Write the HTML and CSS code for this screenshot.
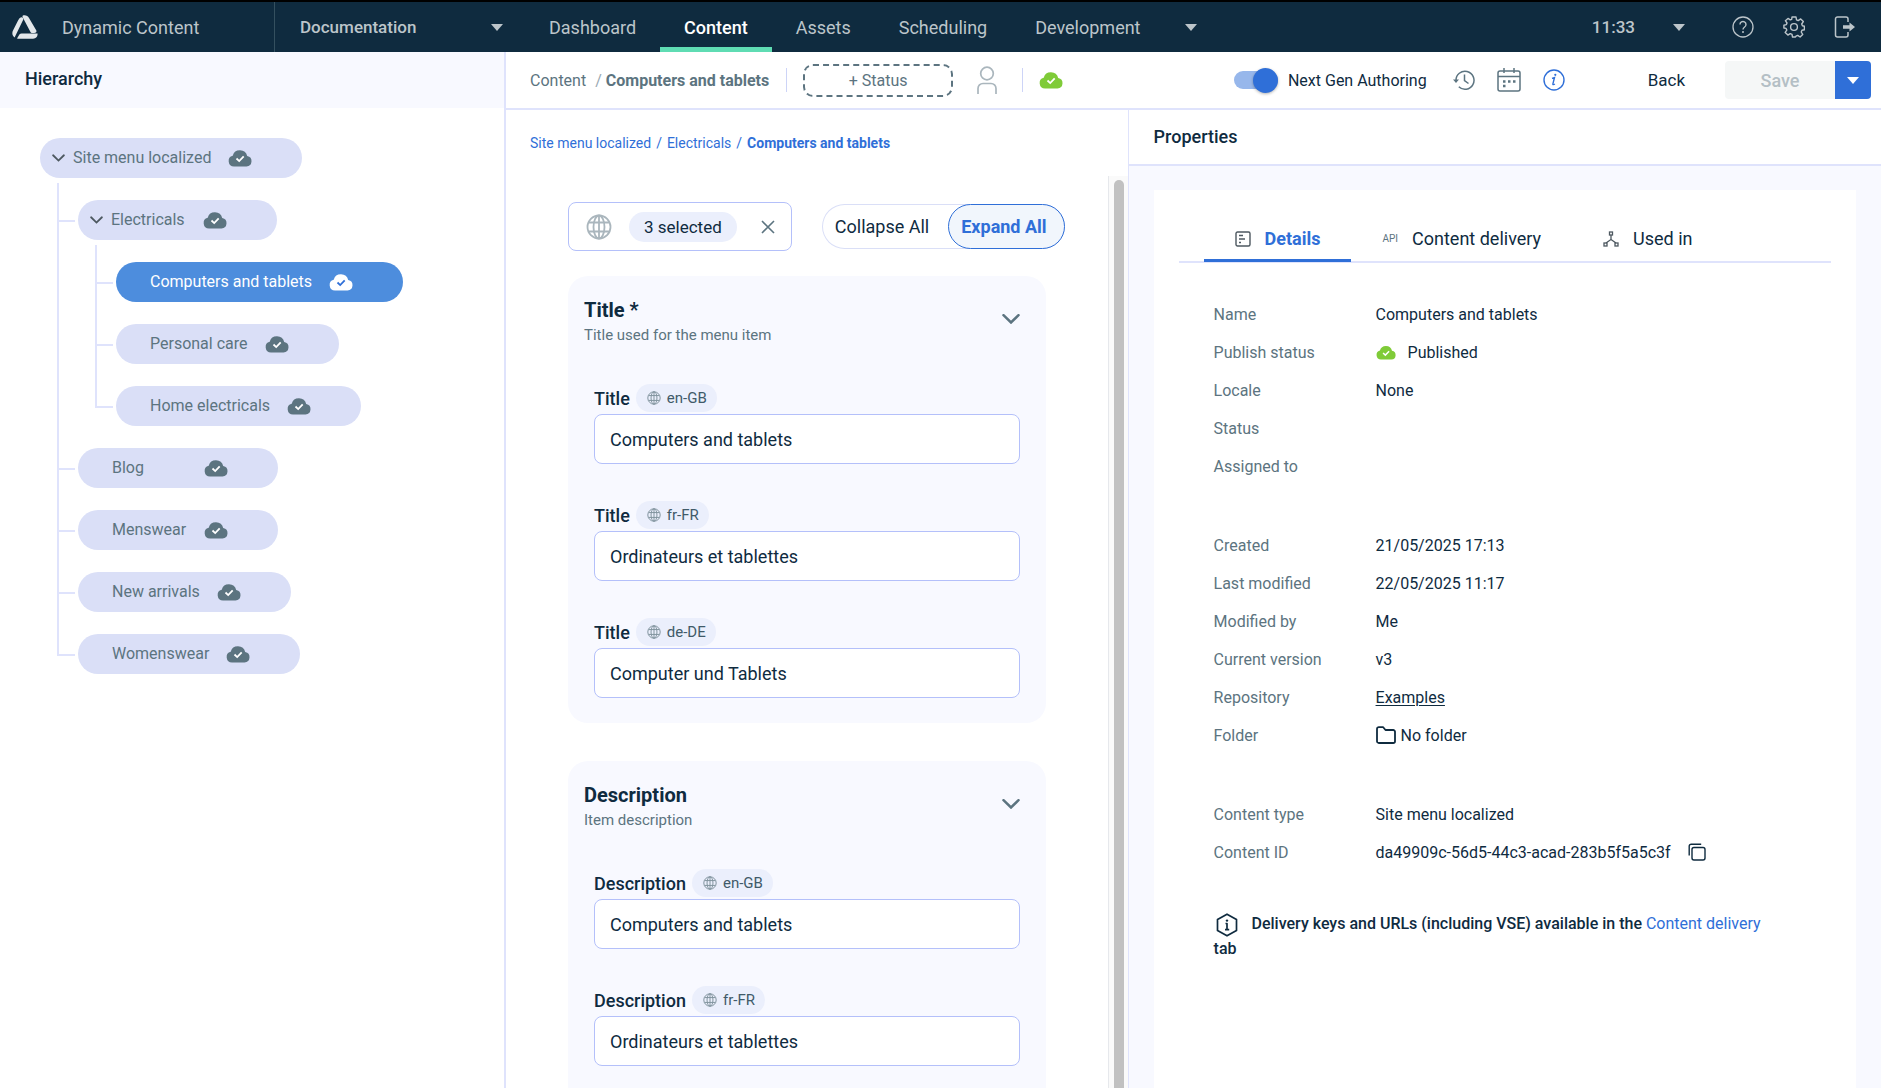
FILE: index.html
```html
<!DOCTYPE html>
<html lang="en">
<head>
    <meta charset="UTF-8">
    <meta name="viewport" content="width=device-width, initial-scale=1.0">
    <title>Dynamic Content</title>
    <link rel="stylesheet" href="styles.css">
</head>
<body>
    <svg class="sprite" aria-hidden="true">
        <symbol id="cloud" viewBox="0 0 24 18">
            <path fill="currentColor" stroke="none" d="M6 17.500a5.500 5.500 0 0 1-1.300-10.800A7.500 7.500 0 0 1 19.200 7 5.300 5.300 0 0 1 18.500 17.500z"/>
            <path fill="none" stroke-width="1.800" d="M8.500 9.500l2.700 2.600 4.500-4.700"/>
        </symbol>
        <symbol id="globe" viewBox="0 0 26 26">
            <g fill="none" stroke="currentColor" stroke-width="1.800">
                <circle cx="13" cy="13" r="11.500"/>
                <ellipse cx="13" cy="13" rx="5.500" ry="11.500"/>
                <path d="M13 1.500v23M3 8.500h20M3 17.500h20"/>
            </g>
        </symbol>
        <symbol id="chevron" viewBox="0 0 18 10">
            <path fill="none" stroke="currentColor" stroke-width="2.500" stroke-linecap="round" d="M1.500 1.200L9 8.500l7.500-7.300"/>
        </symbol>
        <symbol id="caret" viewBox="0 0 12 7">
            <path fill="currentColor" d="M0 0h12L6 7z"/>
        </symbol>
    </svg>

    <header class="topbar">
        <a class="brand" href="#">
            <svg class="logo" viewBox="0 0 26 24">
                <path d="M9.300 2.200C7.600 2.500 6.800 4.300 5.800 6L1 15.500C-.2 18 .2 20.600 2.600 22.400L11.200 4.800C11.700 3.500 10.800 2 9.300 2.200z"/>
                <path d="M10.800.5C13.500-.3 15.800.8 17 3L24.200 15.200C25 16.800 24 18 22.300 18H20.500C19.300 18 18.700 17.300 18.200 16.400L10.400 1.800z"/>
                <path d="M5 23.400L7.400 19.600C7.900 18.900 8.700 18.500 9.600 18.500H25.600C25.700 21.500 24 23.700 21 23.700H6z"/>
            </svg>
            Dynamic Content
        </a>
        <div class="hub">
            <select class="hub-select" aria-label="Hub">
                <option>Documentation</option>
            </select>
            <svg class="caret"><use href="#caret"/></svg>
        </div>
        <nav class="nav">
            <a href="#">Dashboard</a>
            <a href="#" class="active">Content</a>
            <a href="#">Assets</a>
            <a href="#">Scheduling</a>
            <a href="#">Development</a>
            <button class="nav-more" aria-label="More"><svg class="caret"><use href="#caret"/></svg></button>
        </nav>
        <div class="tools">
            <button class="clock">11:33 <svg class="caret"><use href="#caret"/></svg></button>
            <button aria-label="Help">
                <svg width="22" height="22" viewBox="0 0 22 22">
                    <circle cx="11" cy="11" r="10" fill="none" stroke="currentColor" stroke-width="1.300"/>
                    <path d="M8 8.500a3 3 0 1 1 4.600 2.500c-1.200.8-1.600 1.300-1.600 2.500" fill="none" stroke="currentColor" stroke-width="1.400"/>
                    <circle cx="11" cy="16" r="1" fill="currentColor"/>
                </svg>
            </button>
            <button aria-label="Settings">
                <svg width="22" height="22" viewBox="0 0 22 22">
                    <g fill="none" stroke="currentColor" stroke-width="1.400" stroke-linejoin="round">
                        <path d="M9 1h4l.5 2.800 1.700.8 2.500-1.700 2.600 2.700-1.600 2.400.7 1.700 2 .5v3.600l-2.400.5-.8 1.700 1.500 2.400-2.600 2.600-2.400-1.600-1.700.7L12.500 21h-3L9 18.400l-1.800-.8-2.300 1.500-2.700-2.700 1.600-2.300-.7-1.700L.9 12V9.200l2.500-.6.6-1.600-1.600-2.300L5 2.400l2.300 1.500 1.400-.5z"/>
                        <circle cx="11" cy="11" r="3.400"/>
                    </g>
                </svg>
            </button>
            <button aria-label="Log out">
                <svg width="22" height="22" viewBox="0 0 22 22">
                    <path d="M14 6V3a2 2 0 0 0-2-2H3.500a2 2 0 0 0-2 2v16a2 2 0 0 0 2 2H12a2 2 0 0 0 2-2v-3" fill="none" stroke="currentColor" stroke-width="1.500"/>
                    <path d="M9 9.300h6.500V6.500L21 11l-5.500 4.500v-2.800H9z" fill="currentColor"/>
                </svg>
            </button>
        </div>
    </header>

    <div class="layout">
        <aside class="sidebar">
            <h2 class="sidebar-title">Hierarchy</h2>
            <ul class="tree">
                <li>
                    <a href="#" class="node"><svg class="toggle"><use href="#chevron"/></svg><span>Site menu localized</span><svg class="cloud"><use href="#cloud"/></svg></a>
                    <ul>
                        <li>
                            <a href="#" class="node"><svg class="toggle"><use href="#chevron"/></svg><span>Electricals</span><svg class="cloud"><use href="#cloud"/></svg></a>
                            <ul>
                                <li><a href="#" class="node leaf selected"><span>Computers and tablets</span><svg class="cloud"><use href="#cloud"/></svg></a></li>
                                <li><a href="#" class="node leaf"><span>Personal care</span><svg class="cloud"><use href="#cloud"/></svg></a></li>
                                <li><a href="#" class="node leaf"><span>Home electricals</span><svg class="cloud"><use href="#cloud"/></svg></a></li>
                            </ul>
                        </li>
                        <li><a href="#" class="node leaf"><span>Blog</span><svg class="cloud"><use href="#cloud"/></svg></a></li>
                        <li><a href="#" class="node leaf"><span>Menswear</span><svg class="cloud"><use href="#cloud"/></svg></a></li>
                        <li><a href="#" class="node leaf"><span>New arrivals</span><svg class="cloud"><use href="#cloud"/></svg></a></li>
                        <li><a href="#" class="node leaf"><span>Womenswear</span><svg class="cloud"><use href="#cloud"/></svg></a></li>
                    </ul>
                </li>
            </ul>
        </aside>

        <main class="main">
            <div class="toolbar">
                <div class="location"><a href="#">Content</a><span>/</span><strong>Computers and tablets</strong></div>
                <span class="divider"></span>
                <button class="status">+ Status</button>
                <button class="assignee" aria-label="Assign">
                    <svg width="20" height="28" viewBox="0 0 20 28" fill="none" stroke="currentColor" stroke-width="1.700">
                        <circle cx="10" cy="7.500" r="6.300"/>
                        <path d="M1 28v-5.500a5 5 0 0 1 5-5h8a5 5 0 0 1 5 5V28"/>
                    </svg>
                </button>
                <span class="divider"></span>
                <svg class="cloud published"><use href="#cloud"/></svg>
                <div class="actions">
                    <label class="switch"><input type="checkbox" checked>Next Gen Authoring</label>
                    <button aria-label="History">
                        <svg width="22" height="22" viewBox="0 0 22 22" fill="none" stroke="currentColor" stroke-width="1.500">
                            <path d="M3 11.500A9 9 0 1 1 5.800 17.800M11.500 5.500v6l4 3"/>
                            <path d="M0 10.500h6L3 14z" fill="currentColor" stroke="none"/>
                        </svg>
                    </button>
                    <button aria-label="Schedule">
                        <svg width="24" height="24" viewBox="0 0 24 24" fill="none" stroke="currentColor" stroke-width="1.500">
                            <rect x="1" y="3" width="22" height="20" rx="2"/>
                            <path d="M1 8.500h22M7 0v5M17 0v5"/>
                            <path d="M6 13.500h2.500M11 13.500h2.500M16 13.500h2.500M6 18h2.500" stroke-width="2.400"/>
                        </svg>
                    </button>
                    <button class="info" aria-label="Information">
                        <svg width="22" height="22" viewBox="0 0 22 22" fill="none" stroke="currentColor" stroke-width="1.400">
                            <circle cx="11" cy="11" r="10"/>
                            <path d="M9 9.300l2.500-.8-1.600 6.300c-.2 1 .6 1.200 2 .2"/>
                            <circle cx="12.300" cy="5.800" r="1.100" fill="currentColor" stroke="none"/>
                        </svg>
                    </button>
                    <button class="back">Back</button>
                    <div class="save">
                        <button class="save-main" disabled>Save</button>
                        <button class="save-more" aria-label="More save options"><svg class="caret"><use href="#caret"/></svg></button>
                    </div>
                </div>
            </div>

            <div class="workspace">
                <section class="editor">
                    <nav class="breadcrumb">
                        <a href="#">Site menu localized</a>
                        <span>/</span>
                        <a href="#">Electricals</a>
                        <span>/</span>
                        <a href="#" class="current">Computers and tablets</a>
                    </nav>
                    <div class="scroller">
                        <div class="content">
                            <div class="controls">
                                <div class="locales">
                                    <svg class="globe"><use href="#globe"/></svg>
                                    <button class="count">3 selected</button>
                                    <button class="clear" aria-label="Clear">
                                        <svg width="14" height="14" viewBox="0 0 14 14" stroke="currentColor" stroke-width="1.600"><path d="M1 1l12 12M13 1L1 13"/></svg>
                                    </button>
                                </div>
                                <div class="expand">
                                    <button>Collapse All</button>
                                    <button class="active">Expand All</button>
                                </div>
                            </div>

                            <section class="card">
                                <div class="card-head">
                                    <div>
                                        <h3>Title *</h3>
                                        <p>Title used for the menu item</p>
                                    </div>
                                    <button aria-label="Collapse Title"><svg class="chevron"><use href="#chevron"/></svg></button>
                                </div>
                                <div class="field">
                                    <label for="title-en">Title <span class="locale"><svg class="globe"><use href="#globe"/></svg>en-GB</span></label>
                                    <input type="text" id="title-en" value="Computers and tablets">
                                </div>
                                <div class="field">
                                    <label for="title-fr">Title <span class="locale"><svg class="globe"><use href="#globe"/></svg>fr-FR</span></label>
                                    <input type="text" id="title-fr" value="Ordinateurs et tablettes">
                                </div>
                                <div class="field">
                                    <label for="title-de">Title <span class="locale"><svg class="globe"><use href="#globe"/></svg>de-DE</span></label>
                                    <input type="text" id="title-de" value="Computer und Tablets">
                                </div>
                            </section>

                            <section class="card">
                                <div class="card-head">
                                    <div>
                                        <h3>Description</h3>
                                        <p>Item description</p>
                                    </div>
                                    <button aria-label="Collapse Description"><svg class="chevron"><use href="#chevron"/></svg></button>
                                </div>
                                <div class="field">
                                    <label for="description-en">Description <span class="locale"><svg class="globe"><use href="#globe"/></svg>en-GB</span></label>
                                    <input type="text" id="description-en" value="Computers and tablets">
                                </div>
                                <div class="field">
                                    <label for="description-fr">Description <span class="locale"><svg class="globe"><use href="#globe"/></svg>fr-FR</span></label>
                                    <input type="text" id="description-fr" value="Ordinateurs et tablettes">
                                </div>
                            </section>
                        </div>
                        <div class="scrollbar"><div class="thumb"></div></div>
                    </div>
                </section>

                <section class="properties">
                    <h2 class="properties-title">Properties</h2>
                    <div class="panel">
                        <div class="tabs" role="tablist">
                            <button class="tab active" role="tab" aria-selected="true">
                                <svg width="16" height="16" viewBox="0 0 16 16" fill="none" stroke="currentColor" stroke-width="1.400">
                                    <rect x="1" y="1" width="14" height="14" rx="1.500"/>
                                    <path d="M4 4.500h4M4 8h6M4 11.500h2"/>
                                </svg>
                                Details
                            </button>
                            <button class="tab" role="tab">
                                <span class="api">API</span>
                                Content delivery
                            </button>
                            <button class="tab" role="tab">
                                <svg width="16" height="16" viewBox="0 0 16 16" fill="none" stroke="currentColor" stroke-width="1.300">
                                    <rect x="6.500" y="1" width="3" height="3"/>
                                    <rect x="1" y="12" width="3" height="3"/>
                                    <rect x="12" y="12" width="3" height="3"/>
                                    <path d="M8 4v4.500L3 12M8 8.500L13 12"/>
                                </svg>
                                Used in
                            </button>
                        </div>

                        <div class="details">
                            <dl>
                                <dt>Name</dt><dd>Computers and tablets</dd>
                                <dt>Publish status</dt><dd class="publish"><svg class="cloud small published"><use href="#cloud"/></svg>Published</dd>
                                <dt>Locale</dt><dd>None</dd>
                                <dt>Status</dt><dd></dd>
                                <dt>Assigned to</dt><dd></dd>
                            </dl>
                            <dl>
                                <dt>Created</dt><dd>21/05/2025 17:13</dd>
                                <dt>Last modified</dt><dd>22/05/2025 11:17</dd>
                                <dt>Modified by</dt><dd>Me</dd>
                                <dt>Current version</dt><dd>v3</dd>
                                <dt>Repository</dt><dd><a href="#">Examples</a></dd>
                                <dt>Folder</dt>
                                <dd class="folder">
                                    <svg width="20" height="18" viewBox="0 0 20 18" fill="none" stroke="currentColor" stroke-width="1.800" stroke-linejoin="round"><path d="M1 3a1.800 1.800 0 0 1 1.800-1.800h4.400L9.500 4h7.700A1.800 1.800 0 0 1 19 5.800v9.400a1.800 1.800 0 0 1-1.800 1.800H2.800A1.800 1.800 0 0 1 1 15.200z"/></svg>
                                    No folder
                                </dd>
                            </dl>
                            <dl>
                                <dt>Content type</dt><dd>Site menu localized</dd>
                                <dt>Content ID</dt>
                                <dd class="content-id">
                                    da49909c-56d5-44c3-acad-283b5f5a5c3f
                                    <button aria-label="Copy ID">
                                        <svg width="18" height="18" viewBox="0 0 18 18" fill="none" stroke="currentColor" stroke-width="1.400">
                                            <rect x="4" y="4.500" width="13" height="12.500" rx="2"/>
                                            <path d="M1.200 12.500V3.200a2 2 0 0 1 2-2h10"/>
                                        </svg>
                                    </button>
                                </dd>
                            </dl>
                            <p class="note">
                                <svg width="26" height="24" viewBox="0 0 26 24" fill="none" stroke="currentColor" stroke-width="1.700" stroke-linejoin="round">
                                    <path d="M13 1.200l9.500 5.300v11L13 22.800l-9.500-5.300v-11z"/>
                                    <path d="M11.500 10.500H13V16.500M11 16.700h4.200"/>
                                    <circle cx="13" cy="7.600" r="1.200" fill="currentColor" stroke="none"/>
                                </svg>
                                Delivery keys and URLs (including VSE) available in the <a href="#">Content delivery</a> tab
                            </p>
                        </div>
                    </div>
                </section>
            </div>
        </main>
    </div>
</body>
</html>
```
FILE: styles.css
```css
* {
    box-sizing: border-box;
}

body {
    font-family: Roboto, "Liberation Sans", sans-serif;
    font-size: 16px;
    margin: 0;
    height: 100vh;
    display: flex;
    flex-direction: column;
    overflow: hidden;
    color: #0f2b3f;
    background: white;
}

button, input, select {
    font: inherit;
    color: inherit;
}

button {
    padding: 0;
    border: none;
    background: none;
    cursor: pointer;
}

button svg {
    display: block;
}

a {
    color: inherit;
    text-decoration: none;
}

h2, h3, p, ul, dl, dd {
    margin: 0;
    padding: 0;
}

ul {
    list-style: none;
}

h2 {
    font-size: 18px;
    font-weight: 500;
}

.sprite {
    display: none;
}

.caret {
    width: 12px;
    height: 7px;
}

.cloud {
    width: 24px;
    height: 18px;
    flex-shrink: 0;
    color: #5c7480;
    stroke: white;
}

.cloud.small {
    width: 20px;
    height: 15px;
}

.cloud.published {
    color: #7fcb38;
}

/* Top bar */

.topbar {
    display: flex;
    flex-shrink: 0;
    height: 52px;
    border-top: 2px solid black;
    background: #0f2b3f;
    color: #bcc5ca;
    font-size: 18px;
}

.brand {
    display: flex;
    align-items: center;
    gap: 24px;
    width: 275px;
    padding-left: 12px;
    border-right: 1px solid #34505f;
}

.logo {
    width: 26px;
    height: 24px;
    fill: #e3e7ea;
}

.hub {
    display: grid;
    align-items: center;
    width: 250px;
    padding: 0 22px 0 25px;
    font-size: 17px;
    font-weight: 500;
}

.hub-select {
    grid-area: 1 / 1;
    width: 100%;
    height: 100%;
    padding: 0;
    border: none;
    appearance: none;
    background: none;
}

.hub .caret {
    grid-area: 1 / 1;
    justify-self: end;
    pointer-events: none;
}

.nav {
    display: flex;
}

.nav a {
    display: flex;
    align-items: center;
    padding: 5px 24px 0;
    border-bottom: 5px solid transparent;
}

.nav a.active {
    color: white;
    font-weight: 500;
    border-bottom-color: #5fdcb3;
}

.nav-more {
    padding: 0 20px;
}

.tools {
    display: flex;
    align-items: center;
    gap: 29px;
    margin-left: auto;
    padding-right: 25px;
}

.clock {
    display: flex;
    align-items: center;
    gap: 38px;
    margin-right: 18px;
    font-size: 17px;
    font-weight: 500;
}

/* Hierarchy */

.layout {
    display: flex;
    flex: 1;
    min-height: 0;
}

.sidebar {
    width: 27%;
    max-width: 506px;
    flex-shrink: 0;
    border-right: 2px solid #dfe3fc;
}

.sidebar-title {
    height: 56px;
    padding-left: 25px;
    line-height: 53px;
    background: #f8f9ff;
}

.tree {
    padding: 30px 0 0 40px;
}

.tree li {
    position: relative;
}

.tree ul {
    padding: 22px 0 0 38px;
}

.tree ul li + li {
    margin-top: 22px;
}

/* Connector lines between a node and its parent */
.tree ul li::before,
.tree ul li:not(:last-child)::after {
    content: "";
    position: absolute;
    left: -21px;
    top: -17px;
    border-left: 2px solid #dfe3fc;
}

.tree ul li::before {
    width: 16px;
    height: 37px;
    border-bottom: 2px solid #dfe3fc;
}

.tree ul li:not(:last-child)::after {
    bottom: -5px;
}

.node {
    display: inline-flex;
    align-items: center;
    height: 40px;
    padding: 0 50px 0 12px;
    border-radius: 20px;
    background: #dadff7;
    color: #5c7480;
    vertical-align: top;
}

.node span {
    min-width: 75px;
    margin-right: 17px;
    padding-bottom: 2px;
}

.node.leaf {
    padding-left: 34px;
}

.node.selected {
    background: #4d8ddd;
    color: white;
}

.node.selected .cloud {
    color: white;
    stroke: #2f6fd8;
}

.toggle {
    width: 13px;
    height: 8px;
    margin-right: 8px;
    color: #4d5860;
}

/* Toolbar */

.main {
    display: flex;
    flex: 1;
    flex-direction: column;
    min-width: 0;
}

.toolbar {
    display: flex;
    align-items: center;
    flex-shrink: 0;
    height: 58px;
    padding: 0 10px 0 24px;
    border-bottom: 2px solid #dfe3fc;
}

.location {
    display: flex;
    color: #5c7480;
}

.location span {
    margin: 0 4px 0 9px;
    color: #9aa9b2;
}

.location strong {
    font-weight: 700;
}

.divider {
    width: 1px;
    height: 24px;
    margin: 0 16px 0 17px;
    background: #cdd4f7;
}

.status {
    width: 150px;
    height: 33px;
    border: 2px dashed #5c7480;
    border-radius: 10px;
    color: #5c7480;
}

.assignee {
    margin-left: 24px;
    margin-right: 8px;
    color: #aab6bd;
}

.actions {
    display: flex;
    align-items: center;
    gap: 22px;
    margin-left: auto;
    color: #5c7480;
}

.switch {
    display: flex;
    align-items: center;
    gap: 10px;
    margin-right: 4px;
    color: #0f2b3f;
}

.switch input {
    width: 44px;
    height: 18px;
    margin: 0;
    appearance: none;
    border-radius: 9px;
    background: #97b7eb;
}

.switch input::before {
    content: "";
    display: block;
    width: 25px;
    height: 25px;
    margin: -3px 0 0 19px;
    border-radius: 50%;
    background: #2f6fd8;
    box-shadow: 0 1px 3px rgba(0, 0, 0, 0.3);
}

.actions .info {
    color: #2f6fd8;
}

.actions .back {
    margin: 0 18px 0 61px;
    color: #0f2b3f;
    font-size: 17px;
}

.save {
    display: flex;
    height: 38px;
}

.save-main {
    width: 110px;
    border-radius: 4px 0 0 4px;
    background: #f5f7f7;
    color: #b4bfc5;
    font-size: 18px;
    font-weight: 500;
}

.save-more {
    display: grid;
    place-items: center;
    width: 36px;
    border-radius: 0 4px 4px 0;
    background: #2f6fd8;
    color: white;
}

/* Editor */

.workspace {
    display: flex;
    flex: 1;
    min-height: 0;
}

.editor {
    display: flex;
    flex: 622;
    flex-direction: column;
    min-width: 0;
}

.breadcrumb {
    display: flex;
    gap: 5px;
    padding: 22px 24px;
    color: #2f6fd8;
    font-size: 14px;
    line-height: 22px;
}

.breadcrumb .current {
    font-weight: 700;
}

.scroller {
    display: flex;
    flex: 1;
    min-height: 0;
}

.content {
    display: flex;
    flex: 1;
    flex-direction: column;
    padding: 26px 62px 0;
    overflow: hidden;
}

.scrollbar {
    width: 20px;
    padding: 4px 5px 0;
    border-left: 1px solid #e6e8ec;
    background: #fafafa;
}

.thumb {
    width: 10px;
    height: 100%;
    border-radius: 5px 5px 0 0;
    background: #c1c1c1;
}

.controls {
    display: flex;
    align-items: center;
    gap: 30px;
    margin-bottom: 25px;
    white-space: nowrap;
}

.locales {
    display: flex;
    align-items: center;
    height: 49px;
    padding: 0 16px 0 17px;
    border: 1px solid #b4c0fa;
    border-radius: 8px;
}

.locales .globe {
    width: 26px;
    height: 26px;
    color: #aab6bd;
}

.count {
    height: 30px;
    margin: 0 24px 0 17px;
    padding: 0 15px;
    border-radius: 15px;
    background: #ebeffc;
    font-size: 17px;
}

.clear {
    color: #5c7480;
}

.expand {
    display: flex;
    height: 45px;
    border-radius: 23px;
    box-shadow: inset 0 0 0 1px #dadff7;
    font-size: 18px;
}

.expand button {
    padding: 0 19px 0 13px;
}

.expand .active {
    padding: 0 17px 0 12px;
    border: 1px solid #2f6fd8;
    border-radius: 23px;
    background: #f1f6fc;
    color: #2f6fd8;
    font-weight: 700;
}

.card {
    flex-shrink: 0;
    margin-bottom: 38px;
    padding: 22px 26px 25px;
    border-radius: 20px;
    background: #f8f9ff;
}

/* The last card runs on below the fold */
.card:last-child {
    flex: 1 0 auto;
    margin-bottom: 0;
    border-radius: 20px 20px 0 0;
}

.card-head {
    display: flex;
    align-items: center;
    justify-content: space-between;
    height: 50px;
    margin: 0 -5px 35px -10px;
}

.card-head h3 {
    font-size: 20px;
    font-weight: 700;
    line-height: 24px;
}

.card-head p {
    color: #5c7480;
    font-size: 15px;
    line-height: 26px;
}

.chevron {
    width: 18px;
    height: 10px;
    color: #5c7480;
}

.card-head button {
    margin: -9px 5px 0 0;
}

.field + .field {
    margin-top: 36px;
}

.field label {
    display: flex;
    align-items: center;
    gap: 6px;
    height: 31px;
    font-size: 18px;
    font-weight: 500;
}

.locale {
    display: flex;
    align-items: center;
    gap: 6px;
    height: 28px;
    padding: 0 10px 0 11px;
    margin-bottom: 2px;
    border-radius: 14px;
    background: #ebeffc;
    color: #405a69;
    font-size: 15px;
    font-weight: 400;
}

.locale .globe {
    width: 14px;
    height: 14px;
    color: #7f929c;
}

.field input {
    display: block;
    width: 100%;
    height: 50px;
    padding: 0 15px;
    border: 1px solid #b4c0fa;
    border-radius: 8px;
    background: white;
    font-size: 18px;
}

/* Properties */

.properties {
    display: flex;
    flex: 753;
    flex-direction: column;
    min-width: 0;
    border-left: 1px solid #dfe3fc;
    background: #f8f9ff;
}

.properties-title {
    height: 56px;
    padding-left: 25px;
    border-bottom: 2px solid #dfe3fc;
    background: white;
    line-height: 54px;
}

.panel {
    flex: 1;
    margin: 24px 25px 0;
    padding: 25px 25px 0;
    background: white;
}

.tabs {
    display: flex;
    padding-left: 25px;
    border-bottom: 2px solid #dfe3fc;
    font-size: 18px;
}

.tab {
    display: flex;
    align-items: center;
    gap: 14px;
    height: 47px;
    margin-bottom: -1px;
    padding: 3px 31px 0;
    border-bottom: 3px solid transparent;
}

.tab.active {
    border-bottom-color: #2f6fd8;
    color: #2f6fd8;
    font-weight: 700;
}

.tab svg {
    color: #4d5860;
}

.api {
    color: #5c7480;
    font-size: 10px;
}

.details {
    padding: 32px 54px 0 35px;
}

dl {
    display: grid;
    grid-template-columns: 162px 1fr;
    grid-auto-rows: 38px;
    align-items: center;
    margin-bottom: 41px;
}

dt {
    color: #5c7480;
}

dd a {
    text-decoration: underline;
    text-underline-offset: 2px;
}

.publish,
.folder,
.content-id {
    display: flex;
    align-items: center;
    gap: 12px;
}

.folder {
    gap: 5px;
}

.content-id {
    gap: 17px;
}

.note {
    font-weight: 500;
    line-height: 24px;
}

.note svg {
    margin-right: 8px;
    vertical-align: middle;
}

.note a {
    color: #2f6fd8;
    font-weight: 400;
}
```
